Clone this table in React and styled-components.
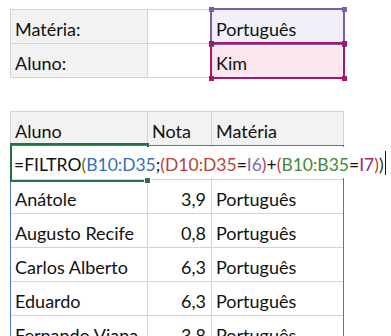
import React from 'react';
import styled, { createGlobalStyle } from 'styled-components';

const GRID = '#d4d4d4';
const HEAD_BG = '#f2f2f2';

const GlobalStyle = createGlobalStyle`
  html, body {
    margin: 0;
    overflow: hidden;
    background: #fff;
  }
  body {
    font-family: Lato, "Open Sans", sans-serif;
    font-size: 18px;
    color: #111;
  }
`;

const Sheet = styled.div`
  padding: 9px 0 0 10px;
  display: flex;
  flex-direction: column;
  align-items: flex-start;
`;

const Grid = styled.div`
  display: grid;
  grid-template-columns: 136px 63px 131px;
  grid-auto-rows: 33px;
  gap: 1px;
  background: ${GRID};
  padding: ${p => (p.$open ? '0 1px 1px' : '1px')};
`;

const Spacer = styled.div`
  height: 33px;
`;

const Cell = styled.div`
  position: relative;
  display: flex;
  align-items: center;
  justify-content: ${p => (p.$num ? 'flex-end' : 'flex-start')};
  padding: 4px ${p => (p.$num ? '5px' : '4px')} 0;
  background: ${p => p.$bg || '#fff'};
  white-space: nowrap;
`;

const Outline = styled.div`
  position: absolute;
  top: -2px;
  left: -2px;
  right: -2px;
  bottom: -2px;
  border: 2px solid ${p => p.$color};
  pointer-events: none;
  z-index: ${p => p.$z || 1};
`;

const Handle = styled.span`
  position: absolute;
  width: 5px;
  height: 5px;
  background: ${p => p.$color};
  ${p => (p.$top ? 'top: -3.5px;' : 'bottom: -3.5px;')}
  ${p => (p.$left ? 'left: -3.5px;' : 'right: -3.5px;')}
`;

const Body = styled.div`
  position: relative;
`;

const RangeBox = styled.div`
  position: absolute;
  top: -1px;
  left: 0;
  right: 0;
  bottom: 0;
  border: 1px solid #4a74c4;
  border-bottom: none;
  pointer-events: none;
`;

const ActiveBox = styled.div`
  position: absolute;
  top: -3px;
  left: -1px;
  right: -2px;
  bottom: -3px;
  border: 2px solid #217346;
  z-index: 2;
`;

const FillHandle = styled.span`
  position: absolute;
  right: -4px;
  bottom: -4px;
  width: 5px;
  height: 5px;
  background: #217346;
  border: 1px solid #fff;
  z-index: 4;
`;

// in-cell formula editor, drawn over the neighbouring cells
const Editor = styled.div`
  position: absolute;
  top: 1px;
  left: 1px;
  width: 369px;
  height: 31px;
  background: #fff;
  display: flex;
  align-items: center;
  padding: 4px 0 0 2px;
  box-sizing: border-box;
  font-size: 17.5px;
  z-index: 3;
`;

const Tok = styled.span`
  color: ${p => p.$c || '#111'};
`;

const Caret = styled.span`
  display: inline-block;
  flex: none;
  width: 1px;
  height: 24px;
  margin: -3px 0 0 1px;
  background: #111;
`;

const formula = [
  ['=FILTRO'],
  ['(', '#7f6000'],
  ['B10:D35', '#3470b8'],
  [';'],
  ['(D10:D35', '#b8413a'],
  ['='],
  ['I6', '#8a63b0'],
  [')', '#b8413a'],
  ['+'],
  ['(', '#b8413a'],
  ['B10:B35', '#3f8a3c'],
  ['='],
  ['I7', '#a8207a'],
  [')', '#b8413a'],
  [')', '#3a2f10'],
];

const students = [
  ['Anátole', '3,9'],
  ['Augusto Recife', '0,8'],
  ['Carlos Alberto', '6,3'],
  ['Eduardo', '6,3'],
  ['Fernando Viana', '3,8'],
];

function Corners({ color }) {
  return (
    <>
      <Handle $color={color} $top $left />
      <Handle $color={color} $top />
      <Handle $color={color} $left />
      <Handle $color={color} />
    </>
  );
}

export default function App() {
  return (
    <>
      <GlobalStyle />
      <Sheet>
        <Grid>
          <Cell $bg={HEAD_BG}>Matéria:</Cell>
          <Cell />
          <Cell $bg="#f0effa">
            Português
            <Outline $color="#7d5ca8">
              <Corners color="#7d5ca8" />
            </Outline>
          </Cell>
          <Cell $bg={HEAD_BG}>Aluno:</Cell>
          <Cell />
          <Cell $bg="#fbe6ee">
            Kim
            <Outline $color="#a5166f" $z={2}>
              <Corners color="#a5166f" />
            </Outline>
          </Cell>
        </Grid>

        <Spacer />

        <Grid>
          <Cell $bg={HEAD_BG}>Aluno</Cell>
          <Cell $bg={HEAD_BG}>Nota</Cell>
          <Cell $bg={HEAD_BG}>Matéria</Cell>
        </Grid>
        <Body>
          <Grid $open>
            <Cell>
              <ActiveBox>
                <FillHandle />
              </ActiveBox>
              <Editor>
                {formula.map(([text, color], i) => (
                  <Tok key={i} $c={color}>{text}</Tok>
                ))}
                <Caret />
              </Editor>
            </Cell>
            <Cell />
            <Cell />
            {students.map(([name, grade]) => (
              <React.Fragment key={name}>
                <Cell>{name}</Cell>
                <Cell $num>{grade}</Cell>
                <Cell>Português</Cell>
              </React.Fragment>
            ))}
          </Grid>
          <RangeBox />
        </Body>
      </Sheet>
    </>
  );
}
